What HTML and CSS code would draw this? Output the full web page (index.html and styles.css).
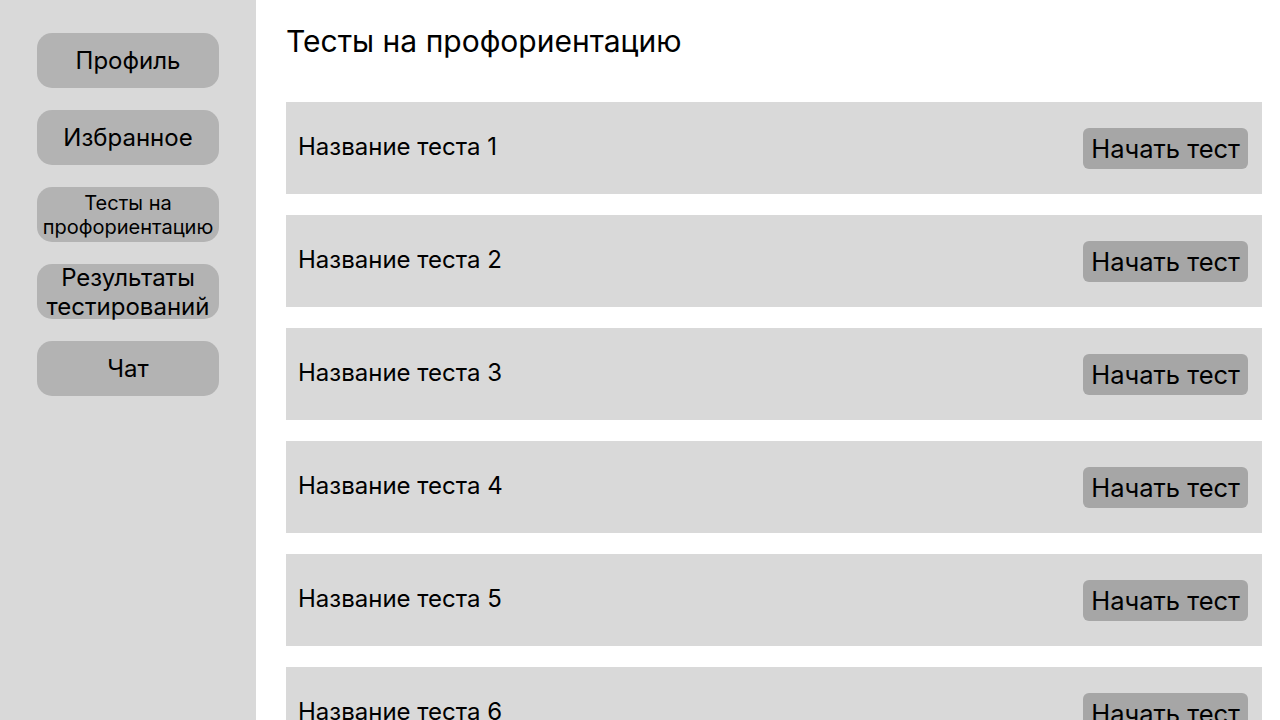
FILE: index.html
```html
<!DOCTYPE html>
<html lang="ru">
<head>
<meta charset="utf-8">
<title>Тесты на профориентацию</title>
<link rel="stylesheet" href="styles.css">
</head>
<body>
<div class="layout">
  <aside class="sidebar">
    <a class="nav-btn">Профиль</a>
    <a class="nav-btn">Избранное</a>
    <a class="nav-btn nav-small">Тесты на профориентацию</a>
    <a class="nav-btn">Результаты тестирований</a>
    <a class="nav-btn">Чат</a>
  </aside>
  <main class="main">
    <h1 class="title">Тесты на профориентацию</h1>
    <div class="list">
      <div class="row"><span class="row-name">Название теста 1</span><button class="start">Начать тест</button></div>
      <div class="row"><span class="row-name">Название теста 2</span><button class="start">Начать тест</button></div>
      <div class="row"><span class="row-name">Название теста 3</span><button class="start">Начать тест</button></div>
      <div class="row"><span class="row-name">Название теста 4</span><button class="start">Начать тест</button></div>
      <div class="row"><span class="row-name">Название теста 5</span><button class="start">Начать тест</button></div>
      <div class="row"><span class="row-name">Название теста 6</span><button class="start">Начать тест</button></div>
    </div>
  </main>
</div>
</body>
</html>
```
FILE: styles.css
```css
html, body {
  margin: 0;
  padding: 0;
  height: 100%;
  overflow: hidden;
  background: #ffffff;
  font-family: Inter, "Noto Sans", sans-serif;
  color: #000;
}
.layout {
  display: flex;
  height: 720px;
}
.sidebar {
  width: 256px;
  flex: none;
  background: #d9d9d9;
  display: flex;
  flex-direction: column;
  align-items: center;
  padding-top: 33px;
  gap: 22px;
  box-sizing: border-box;
}
.nav-btn {
  width: 182px;
  height: 55px;
  background: #b3b3b3;
  border-radius: 15px;
  display: flex;
  align-items: center;
  justify-content: center;
  text-align: center;
  font-size: 24px;
  line-height: 29px;
}
.nav-small {
  font-size: 20px;
  line-height: 24px;
}
.main {
  flex: 1;
  padding: 0 18px 0 30px;
  min-width: 0;
}
.title {
  margin: 22px 0 41px;
  font-size: 30px;
  font-weight: 400;
  line-height: 39px;
}
.list {
  display: flex;
  flex-direction: column;
  gap: 21px;
}
.row {
  height: 92px;
  background: #d9d9d9;
  display: flex;
  align-items: center;
  justify-content: space-between;
  padding: 0 14px 0 12px;
  flex: none;
}
.row-name {
  font-size: 24px;
  line-height: 29px;
  margin-top: -4px;
}
.start {
  height: 41px;
  background: #a6a6a6;
  border: none;
  border-radius: 6px;
  padding: 0 8px;
  font-family: inherit;
  font-size: 25.5px;
  color: #000;
}
```
